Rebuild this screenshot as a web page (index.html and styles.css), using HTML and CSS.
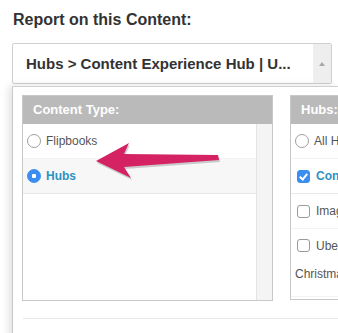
FILE: index.html
```html
<!DOCTYPE html>
<html lang="en">
<head>
    <meta charset="UTF-8">
    <meta name="viewport" content="width=device-width, initial-scale=1.0">
    <title>Report on this Content</title>
    <link rel="stylesheet" href="styles.css">
</head>
<body>
    <h2 class="title">Report on this Content:</h2>

    <div class="select">
        <div class="select-value">Hubs &gt; Content Experience Hub | U...</div>
        <div class="select-arrow"><span class="tri"></span></div>
    </div>

    <div class="panel">
        <div class="columns">
            <!-- Content type list -->
            <div class="box box-type">
                <div class="box-head">Content Type:</div>
                <div class="box-body">
                    <div class="list">
                        <div class="row"><span class="radio"></span>Flipbooks</div>
                        <div class="row active"><span class="radio on"></span>Hubs</div>
                    </div>
                    <div class="scroll"></div>
                </div>
            </div>

            <!-- Hubs list -->
            <div class="box box-hubs">
                <div class="box-head">Hubs:</div>
                <div class="list">
                    <div class="row"><span class="radio"></span>All Hubs</div>
                    <div class="row active"><span class="check on"></span>Content Experience Hub</div>
                    <div class="row"><span class="check"></span>Image Gallery Hub</div>
                    <div class="row tall"><span class="check"></span>Uberflip Holiday Campaign Hub<br>Christmas Edition</div>
                    <div class="row"><span class="check"></span>Resources</div>
                </div>
            </div>
        </div>
        <div class="divider"></div>
    </div>

    <svg class="pointer" width="140" height="50" viewBox="90 135 140 50">
        <polygon class="pointer-shadow" points="97,163 130,145 125,156 219,157 220,162 125,169 132,180"/>
        <polygon class="pointer-fill" points="96,161 129,143 124,154 218,155 219,160 124,167 131,178"/>
    </svg>
</body>
</html>
```

FILE: styles.css
```css
body {
    margin: 0;
    font-family: "Liberation Sans", Arial, sans-serif;
    color: #333;
    background: #fff;
    overflow: hidden;
    position: relative;
    height: 333px;
}
.title {
    margin: 0;
    padding: 10px 0 0 13px;
    font-size: 16px;
    line-height: 19px;
    font-weight: bold;
    color: #333;
}
.select {
    display: flex;
    margin: 14px 0 0 12px;
    width: 318px;
    height: 39px;
    border: 1px solid #cfcfcf;
    border-radius: 2px;
}
.select-value {
    flex: 1;
    padding-left: 13px;
    line-height: 39px;
    font-size: 15px;
    font-weight: bold;
    color: #333;
}
.select-arrow {
    width: 18px;
    background: #eee;
    display: flex;
    align-items: center;
    justify-content: center;
}
.tri {
    width: 0;
    height: 0;
    border-left: 3px solid transparent;
    border-right: 3px solid transparent;
    border-bottom: 4px solid #a8a8a8;
}
.panel {
    margin: 2px 0 0 12px;
    border-left: 1px solid #c9c9c9;
    border-top: 1px solid #d0d0d0;
    padding: 8px 0 0 9px;
    box-shadow: -3px 0 8px rgba(0, 0, 0, 0.12);
    height: 260px;
}
.columns {
    display: flex;
    gap: 17px;
}
.box {
    border: 1px solid #c8c8c8;
    height: 204px;
    overflow: hidden;
    flex-shrink: 0;
}
.box-type {
    width: 249px;
}
.box-hubs {
    width: 250px;
    height: 203px;
}
.box-head {
    background: #bababa;
    color: #fff;
    font-size: 13px;
    font-weight: bold;
    height: 28px;
    line-height: 28px;
    padding-left: 10px;
}
.box-body {
    display: flex;
    height: 176px;
}
.list {
    flex: 1;
}
.scroll {
    width: 15px;
    background: #f4f4f4;
    border-left: 1px solid #e4e4e4;
}
.row {
    display: flex;
    align-items: center;
    height: 34px;
    border-bottom: 1px solid #f3f3f3;
    padding-left: 4px;
    font-size: 12px;
    color: #555;
    white-space: nowrap;
}
.row.active {
    background: #f7f7f7;
    border-bottom-color: #e8e8e8;
    font-weight: bold;
    color: #2d92c2;
}
.box-hubs .row.active {
    background: #fff;
}
.row.tall {
    height: 68px;
    display: block;
    line-height: 28px;
    padding-top: 3px;
    box-sizing: border-box;
}
.radio {
    width: 12px;
    height: 12px;
    border: 1px solid #a0a0a0;
    border-radius: 50%;
    margin-right: 5px;
    box-sizing: content-box;
    background: #fff;
    flex-shrink: 0;
}
.radio.on {
    border-color: #3a8ef2;
    background: radial-gradient(circle, #fff 0 2px, #3a8ef2 2.5px);
}
.check {
    display: inline-block;
    vertical-align: -2px;
    width: 11px;
    height: 11px;
    border: 1px solid #9a9a9a;
    border-radius: 3px;
    margin: 0 6px 0 2px;
    background: #fff;
    flex-shrink: 0;
}
.check.on {
    border-color: #3a8ef2;
    background: #3a8ef2;
    position: relative;
}
.check.on::after {
    content: "";
    position: absolute;
    left: 3px;
    top: 1px;
    width: 3px;
    height: 6px;
    border: solid #fff;
    border-width: 0 2px 2px 0;
    transform: rotate(40deg);
}
.divider {
    margin-top: 17px;
    margin-left: 1px;
    border-top: 1px solid #e8e8e8;
}
.pointer {
    position: absolute;
    left: 90px;
    top: 135px;
}
.pointer-shadow {
    fill: rgba(0, 0, 0, 0.18);
}
.pointer-fill {
    fill: #d42263;
}
```
